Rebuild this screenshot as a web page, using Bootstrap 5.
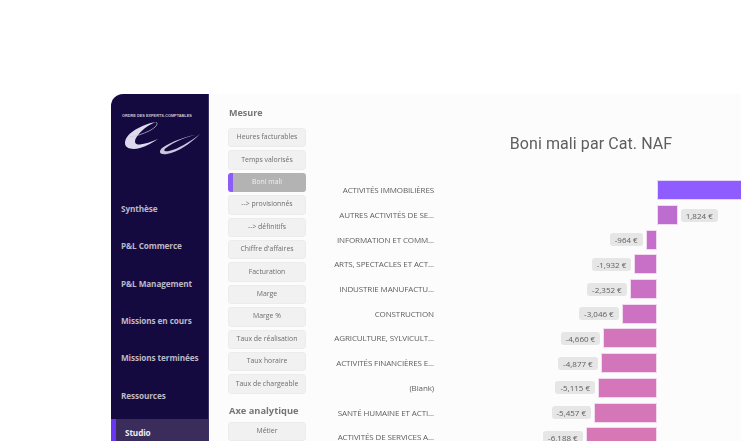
<!DOCTYPE html>
<html lang="fr"><head><meta charset="utf-8"><title>Boni mali</title>
<link href="https://cdn.jsdelivr.net/npm/bootstrap@5.3.0/dist/css/bootstrap.min.css" rel="stylesheet">
<style>
html,body{height:441px;overflow:hidden;background:#fff}
body{font-family:"Open Sans","Noto Sans",sans-serif}
.topgap{height:94px}
.app{margin-left:111px;height:347px;background:#fcfcfc;filter:blur(.35px)}
.side{width:98px;background:#140a40;border-top-left-radius:12px;border-right:1px solid #3b3268;flex:none;overflow:hidden}
.logo-box{height:101px;padding:19.5px 0 0 11px}
.logo-txt{font:bold 3.85px "Liberation Sans",sans-serif;color:#c9c6d8;white-space:nowrap;line-height:5px}
.logo-svg{margin-left:-4px;margin-top:1.5px}
.side-item{height:28px;margin-bottom:9.33px;padding-left:10px;font:700 8.2px/1 "Open Sans",sans-serif;color:#bcb8c6;letter-spacing:-.1px}
.side-item.on{background:#3a2d5c;border-left:5px solid #6b35f5;color:#eeecf2;padding-left:9px;margin-bottom:0}
.slicers{width:78px;margin-left:19px;flex:none}
.slicer-h{font:700 9px/1 "Open Sans",sans-serif;color:#757575;padding-left:1px}
.h1st{padding-top:14px;height:34px}
.h2nd{padding-top:9px;height:25.2px;font-size:9.3px}
.sbtn{height:19.4px;margin-bottom:3px;background:#f1f1f1;border:1px solid #ececec;border-radius:3px;font:400 6.9px/1 "Open Sans",sans-serif;color:#6d6d6d;white-space:nowrap}
.sbtn.on{background:#b3b3b3;color:#f0f0f0;border:0;border-left:5px solid #8b5cf6;padding-right:5px}
.chart{flex:1;min-width:0;overflow:hidden;padding-top:36px}
.ctitle{margin-left:135px;height:28px;margin-bottom:20px;font:400 16px/28px "Roboto",sans-serif;letter-spacing:.08px;color:#605e5c;text-align:center;white-space:nowrap}
.crow{height:24.7px}
.clabel{width:128px;flex:none;text-align:right;font:400 8px/1 "Open Sans",sans-serif;color:#5e5e5e;white-space:nowrap;letter-spacing:-.12px}
.cneg{width:222.7px;flex:none;height:20px}
.cbar{height:20px;flex:none;border:1px solid #f3d9ef}
.pill{height:13px;padding:0 5px;margin:0 3px;background:#e6e6e6;border-radius:3px;font:400 8px/13px "Open Sans",sans-serif;color:#5e5e5e;white-space:nowrap;flex:none}
.w-a{width:110px;background:#8f5cff;border-color:#e4d8ff}.w-b{width:21px;background:#bd6dd0}
.n1{width:11px;background:#c56fca}.n2{width:22.4px;background:#c870c8}.n3{width:27px;background:#ca71c5}
.n4{width:35px;background:#cd72c2}.n5{width:53.5px;background:#d275bb}.n6{width:56px;background:#d375ba}
.n7{width:58.7px;background:#d476b9}.n8{width:62.6px;background:#d576b8}.n9{width:71px;background:#d777b6}
</style></head>
<body>
<div class="topgap"></div>
<div class="app d-flex">
  <nav class="side">
    <div class="logo-box">
      <div class="logo-txt">ORDRE DES EXPERTS-COMPTABLES</div>
      <svg width="85" height="36" viewBox="118 120 85 36" class="d-block logo-svg"><path d="M156 122C143 124 125 133 125 143C125 149 133 150 140 148C147 146 153 142 158 139C151 142 145 144 140 144.5C135 145 134 142 136 138C140 131 148 125 156 122Z" fill="#dcdaec"/><path d="M156 122C159 124 155 128 149 131C143 134 136 136 130 137" fill="none" stroke="#c9c6de" stroke-width=".7"/><path d="M200 134C187 136 172 141 162 148C158 152 160 155 167 154C178 152 190 144 200 134C190 142 178 149 169 151C164 152 163 150 166 148C174 142 187 136 200 134Z" fill="#c9c6de"/></svg>
    </div>
    <div class="side-item d-flex align-items-center">Synthèse</div>
    <div class="side-item d-flex align-items-center">P&amp;L Commerce</div>
    <div class="side-item d-flex align-items-center">P&amp;L Management</div>
    <div class="side-item d-flex align-items-center">Missions en cours</div>
    <div class="side-item d-flex align-items-center">Missions terminées</div>
    <div class="side-item d-flex align-items-center">Ressources</div>
    <div class="side-item on d-flex align-items-center">Studio</div>
  </nav>
  <div class="slicers">
    <div class="slicer-h h1st">Mesure</div>
    <div class="sbtn d-flex align-items-center justify-content-center">Heures facturables</div>
    <div class="sbtn d-flex align-items-center justify-content-center">Temps valorisés</div>
    <div class="sbtn on d-flex align-items-center justify-content-center">Boni mali</div>
    <div class="sbtn d-flex align-items-center justify-content-center">--&gt; provisionnés</div>
    <div class="sbtn d-flex align-items-center justify-content-center">--&gt; définitifs</div>
    <div class="sbtn d-flex align-items-center justify-content-center">Chiffre d'affaires</div>
    <div class="sbtn d-flex align-items-center justify-content-center">Facturation</div>
    <div class="sbtn d-flex align-items-center justify-content-center">Marge</div>
    <div class="sbtn d-flex align-items-center justify-content-center">Marge %</div>
    <div class="sbtn d-flex align-items-center justify-content-center">Taux de réalisation</div>
    <div class="sbtn d-flex align-items-center justify-content-center">Taux horaire</div>
    <div class="sbtn d-flex align-items-center justify-content-center">Taux de chargeable</div>
    <div class="slicer-h h2nd">Axe analytique</div>
    <div class="sbtn d-flex align-items-center justify-content-center">Métier</div>
  </div>
  <div class="chart">
    <div class="ctitle">Boni mali par Cat. NAF</div>
    <div class="crow d-flex align-items-center"><div class="clabel">ACTIVITÉS IMMOBILIÈRES</div><div class="cneg"></div><div class="cbar w-a"></div></div>
    <div class="crow d-flex align-items-center"><div class="clabel">AUTRES ACTIVITÉS DE SE...</div><div class="cneg"></div><div class="cbar w-b"></div><div class="pill">1,824 €</div></div>
    <div class="crow d-flex align-items-center"><div class="clabel">INFORMATION ET COMM...</div><div class="cneg d-flex align-items-center justify-content-end"><div class="pill">-964 €</div><div class="cbar n1"></div></div></div>
    <div class="crow d-flex align-items-center"><div class="clabel">ARTS, SPECTACLES ET ACT...</div><div class="cneg d-flex align-items-center justify-content-end"><div class="pill">-1,932 €</div><div class="cbar n2"></div></div></div>
    <div class="crow d-flex align-items-center"><div class="clabel">INDUSTRIE MANUFACTU...</div><div class="cneg d-flex align-items-center justify-content-end"><div class="pill">-2,352 €</div><div class="cbar n3"></div></div></div>
    <div class="crow d-flex align-items-center"><div class="clabel">CONSTRUCTION</div><div class="cneg d-flex align-items-center justify-content-end"><div class="pill">-3,046 €</div><div class="cbar n4"></div></div></div>
    <div class="crow d-flex align-items-center"><div class="clabel">AGRICULTURE, SYLVICULT...</div><div class="cneg d-flex align-items-center justify-content-end"><div class="pill">-4,660 €</div><div class="cbar n5"></div></div></div>
    <div class="crow d-flex align-items-center"><div class="clabel">ACTIVITÉS FINANCIÈRES E...</div><div class="cneg d-flex align-items-center justify-content-end"><div class="pill">-4,877 €</div><div class="cbar n6"></div></div></div>
    <div class="crow d-flex align-items-center"><div class="clabel">(Blank)</div><div class="cneg d-flex align-items-center justify-content-end"><div class="pill">-5,115 €</div><div class="cbar n7"></div></div></div>
    <div class="crow d-flex align-items-center"><div class="clabel">SANTÉ HUMAINE ET ACTI...</div><div class="cneg d-flex align-items-center justify-content-end"><div class="pill">-5,457 €</div><div class="cbar n8"></div></div></div>
    <div class="crow d-flex align-items-center"><div class="clabel">ACTIVITÉS DE SERVICES A...</div><div class="cneg d-flex align-items-center justify-content-end"><div class="pill">-6,188 €</div><div class="cbar n9"></div></div></div>
  </div>
</div>
<script src="https://cdn.jsdelivr.net/npm/bootstrap@5.3.0/dist/js/bootstrap.bundle.min.js"></script>
</body></html>
